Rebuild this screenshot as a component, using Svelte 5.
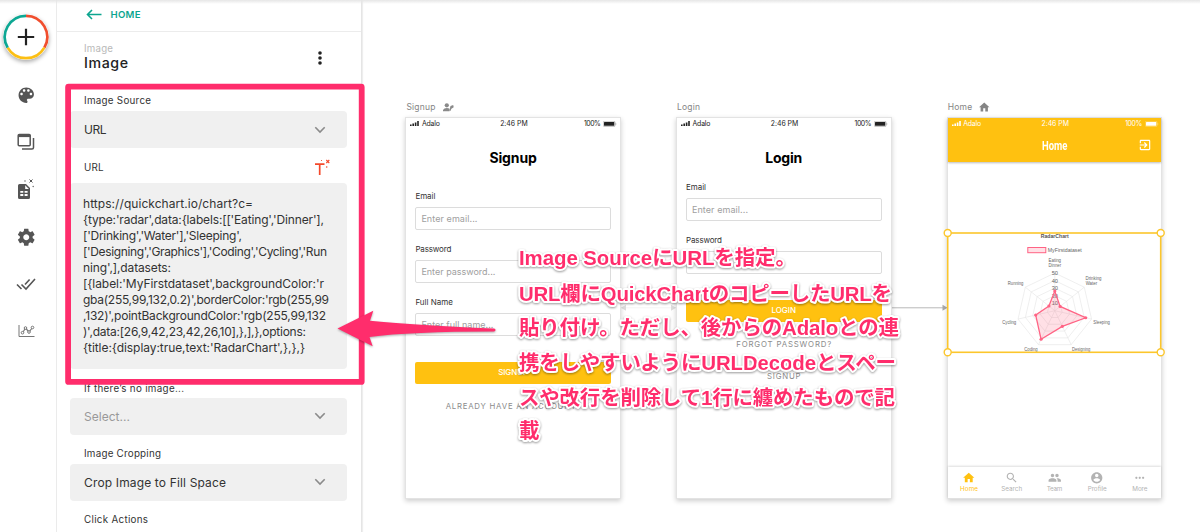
<script>
  function fit(node, width) {
    const n = [...node.textContent].length;
    const natural = node.getBoundingClientRect().width;
    const gap = (width - natural) / (n - 1);
    node.style.letterSpacing = gap + 'px';
    node.style.marginRight = -gap + 'px';
  }

  const urlLines = [
    ['https://quickchart.io/chart?c=', 170],
    ["{type:'radar',data:{labels:[['Eating','Dinner'],", 241],
    ["['Drinking','Water'],'Sleeping',", 159],
    ["['Designing','Graphics'],'Coding','Cycling','Run", 244],
    ["ning',],datasets:", 88],
    ["[{label:'MyFirstdataset',backgroundColor:'r", 241],
    ["gba(255,99,132,0.2)',borderColor:'rgb(255,99", 246],
    [",132)',pointBackgroundColor:'rgb(255,99,132", 243],
    [")',data:[26,9,42,23,42,26,10],},],},options:", 223],
    ["{title:{display:true,text:'RadarChart',},},}", 222]
  ];

  const notes = [
    ['Image SourceにURLを指定。', 265.3, 277],
    ['URL欄にQuickChartのコピーしたURLを', 300.5, 373],
    ['貼り付け。ただし、後からのAdaloとの連', 335.2, 380],
    ['携をしやすいようにURLDecodeとスペー', 370.2, 377],
    ['スや改行を削除して1行に纏めたもので記', 405.2, 376],
    ['載', 438, 20.5]
  ];

  const icons = {
    palette: 'M12 3c-4.97 0-9 4.03-9 9s4.03 9 9 9c.83 0 1.5-.67 1.5-1.5 0-.39-.15-.74-.39-1.01-.23-.26-.38-.61-.38-.99 0-.83.67-1.5 1.5-1.5H16c2.76 0 5-2.24 5-5 0-4.42-4.03-8-9-8zm-5.5 9c-.83 0-1.5-.67-1.5-1.5S5.67 9 6.5 9 8 9.67 8 10.5 7.33 12 6.5 12zm3-4C8.67 8 8 7.33 8 6.5S8.67 5 9.5 5s1.5.67 1.5 1.5S10.33 8 9.5 8zm5 0c-.83 0-1.5-.67-1.5-1.5S13.67 5 14.5 5s1.5.67 1.5 1.5S15.33 8 14.5 8zm3 4c-.83 0-1.5-.67-1.5-1.5S16.67 9 17.5 9s1.5.67 1.5 1.5-.67 1.5-1.5 1.5z',
    gear: 'M19.43 12.98c.04-.32.07-.64.07-.98s-.03-.66-.07-.98l2.11-1.65c.19-.15.24-.42.12-.64l-2-3.46c-.12-.22-.39-.3-.61-.22l-2.49 1c-.52-.4-1.08-.73-1.69-.98l-.38-2.65C14.46 2.18 14.25 2 14 2h-4c-.25 0-.46.18-.49.42l-.38 2.65c-.61.25-1.17.59-1.69.98l-2.49-1c-.23-.09-.49 0-.61.22l-2 3.46c-.13.22-.07.49.12.64l2.11 1.65c-.04.32-.07.65-.07.98s.03.66.07.98l-2.11 1.65c-.19.15-.24.42-.12.64l2 3.46c.12.22.39.3.61.22l2.49-1c.52.4 1.08.73 1.69.98l.38 2.65c.03.24.24.42.49.42h4c.25 0 .46-.18.49-.42l.38-2.65c.61-.25 1.17-.59 1.69-.98l2.49 1c.23.09.49 0 .61-.22l2-3.46c.12-.22.07-.49-.12-.64l-2.11-1.65zM12 15.5c-1.93 0-3.5-1.57-3.5-3.5s1.57-3.5 3.5-3.5 3.5 1.57 3.5 3.5-1.57 3.5-3.5 3.5z',
    home: 'M10 20v-6h4v6h5v-8h3L12 3 2 12h3v8z',
    search: 'M15.5 14h-.79l-.28-.27C15.41 12.59 16 11.11 16 9.5 16 5.91 13.09 3 9.5 3S3 5.91 3 9.5 5.91 16 9.5 16c1.61 0 3.09-.59 4.23-1.57l.27.28v.79l5 4.99L20.49 19l-4.99-5zm-6 0C7.01 14 5 11.99 5 9.5S7.01 5 9.5 5 14 7.01 14 9.5 11.99 14 9.5 14z',
    team: 'M16 11c1.66 0 2.99-1.34 2.99-3S17.66 5 16 5c-1.66 0-3 1.34-3 3s1.34 3 3 3zm-8 0c1.66 0 2.99-1.34 2.99-3S9.66 5 8 5C6.34 5 5 6.34 5 8s1.34 3 3 3zm0 2c-2.33 0-7 1.17-7 3.5V19h14v-2.5c0-2.33-4.67-3.5-7-3.5zm8 0c-.29 0-.62.02-.97.05 1.16.84 1.97 1.97 1.97 3.45V19h6v-2.5c0-2.33-4.67-3.5-7-3.5z',
    profile: 'M12 2C6.48 2 2 6.48 2 12s4.48 10 10 10 10-4.48 10-10S17.52 2 12 2zm0 3c1.66 0 3 1.34 3 3s-1.34 3-3 3-3-1.34-3-3 1.34-3 3-3zm0 14.2c-2.5 0-4.71-1.28-6-3.22.03-1.99 4-3.08 6-3.08 1.99 0 5.97 1.09 6 3.08-1.29 1.94-3.5 3.22-6 3.22z',
    more: 'M6 10c-1.1 0-2 .9-2 2s.9 2 2 2 2-.9 2-2-.9-2-2-2zm12 0c-1.1 0-2 .9-2 2s.9 2 2 2 2-.9 2-2-.9-2-2-2zm-6 0c-1.1 0-2 .9-2 2s.9 2 2 2 2-.9 2-2-.9-2-2-2z',
    exit: 'M10.09 15.59L11.5 17l5-5-5-5-1.41 1.41L12.67 11H3v2h9.67l-2.58 2.59zM19 3H5c-1.11 0-2 .9-2 2v4h2V5h14v14H5v-4H3v4c0 1.1.89 2 2 2h14c1.1 0 2-.9 2-2V5c0-1.1-.9-2-2-2z'
  };

  const tabs = [
    ['home', 'Home', 18],
    ['search', 'Search', 21],
    ['team', 'Team', 15.5],
    ['profile', 'Profile', 19],
    ['more', 'More', 15]
  ];

  const values = [26, 9, 42, 23, 42, 26, 10];
  const R = 37.7;
  const spoke = (v, i) => {
    const a = (i * 2 * Math.PI) / 7 - Math.PI / 2;
    return [(v / 50) * R * Math.cos(a), (v / 50) * R * Math.sin(a)];
  };
  const ring = (v) => values.map((_, i) => spoke(v, i).join(',')).join(' ');
  const dataPts = values.map(spoke);
  const labels = [
    ['Eating', 0, -49.2, 12.5], ['Dinner', 0, -44, 12.5],
    ['Drinking', 38.7, -31, 16], ['Water', 36.6, -25.8, 11.5],
    ['Sleeping', 46.8, 13.3, 16.5], ['Designing', 26.4, 40.2, 18.5],
    ['Coding', -23.8, 40.2, 13.5], ['Cycling', -45.6, 13.3, 14], ['Running', -39.2, -25.7, 15.7]
  ];
</script>

{#snippet icon(name, size)}
  <svg width={size} height={size} viewBox="0 0 24 24" fill="currentColor"><path d={icons[name]} /></svg>
{/snippet}

{#snippet chevron()}
  <svg width="12" height="8" viewBox="0 0 12 8" fill="none" stroke="#8b8b8b" stroke-width="1.6"><path d="M1.3 1.2 6 6l4.7-4.8" /></svg>
{/snippet}

{#snippet status()}
  <div class="status">
    <div class="carrier">
      <svg width="9" height="5" viewBox="0 0 9 5" fill="currentColor"><path d="M0 3.4h1.6V5H0zM2.4 2.6H4V5H2.4zM4.8 1.4h1.6V5H4.8zM7.2 0h1.6v5H7.2z" /></svg>
      <span use:fit={18}>Adalo</span>
    </div>
    <span use:fit={27.5}>2:46 PM</span>
    <div class="charge">
      <span use:fit={17}>100%</span>
      <svg width="14" height="6" viewBox="0 0 14 6"><rect x=".3" y=".3" width="11.8" height="5.2" rx="1" fill="none" stroke="currentColor" stroke-opacity=".5" stroke-width=".5" /><rect x="1" y="1" width="10.3" height="3.8" rx=".5" fill="currentColor" /><path d="M12.7 2v2c.8-.3.8-1.7 0-2" fill="currentColor" opacity=".6" /></svg>
    </div>
  </div>
{/snippet}

{#snippet field(label, lw, hint, hw)}
  <div class="field">
    <div class="name"><span use:fit={lw}>{label}</span></div>
    <div class="input">{#if hint}<span use:fit={hw}>{hint}</span>{/if}</div>
  </div>
{/snippet}

<div class="app">
  <nav class="rail">
    <div class="add">
      <svg width="46" height="46" viewBox="-23 -23 46 46" fill="none" stroke-width="2.7">
        <circle r="22" fill="#fff" />
        <path d="M0-21.2A21.2 21.2 0 0 1 18.36 10.6" stroke="#f04e2e" />
        <path d="M18.36 10.6A21.2 21.2 0 0 1-18.36 10.6" stroke="#fcbf14" />
        <path d="M-18.36 10.6A21.2 21.2 0 0 1 0-21.2" stroke="#0da793" />
        <path d="M-8.2 0H8.2M0-8.2V8.2" stroke="#222" stroke-width="2.2" />
      </svg>
    </div>
    <div class="slot">{@render icon('palette', 20.5)}</div>
    <div class="slot">
      <svg width="18" height="18" viewBox="0 0 18 18" fill="none" stroke="currentColor" stroke-width="1.5"><rect x="1.2" y="1.5" width="12" height="11.3" rx="1" /><path d="M1 3h12.5" stroke-width="2.2" /><path d="M16.5 5v9.5q0 1.5-1.5 1.5H5" /></svg>
    </div>
    <div class="slot">
      <svg width="18" height="22" viewBox="0 0 18 22"><path fill="currentColor" fill-rule="evenodd" d="M2.5 5H9l4 4v9.500q0 1.500-1.500 1.500h-9Q1 20 1 18.500v-12Q1 5 2.500 5zM8.200 6.300V10h3.700zM3.300 12v1.700h3V12zm4.300 0v1.700h3V12zm-4.300 3v2h3v-2zm4.300 0v2h3v-2z" /><path d="m12.500 0.500 3 3m0-3-3 3" stroke="#555" /><circle cx="8" cy="2" r=".8" fill="#777" /><circle cx="16.200" cy="7.500" r=".8" fill="#777" /></svg>
    </div>
    <div class="slot">{@render icon('gear', 20.5)}</div>
    <div class="slot">
      <svg width="20" height="14" viewBox="0 0 20 14" fill="none" stroke="currentColor" stroke-width="1.6"><path d="m1 7.500 4.500 4.500M5.500 7.500l4.500 4.500 9-10M9 7.500l4.600-5" /></svg>
    </div>
    <div class="slot">
      <svg width="17" height="14" viewBox="0 0 17 14" fill="none" stroke="#777" stroke-width="1"><path d="M1 1v11.5h15.5" /><path d="m4.5 9 3-5 3.5 4 3.5-4.5" stroke-width="1.2" /><g fill="#fff"><circle cx="4.5" cy="8.7" r="1.3" /><circle cx="7.5" cy="4" r="1.3" /><circle cx="11" cy="8" r="1.3" /><circle cx="14.5" cy="3.5" r="1.3" /></g></svg>
    </div>
  </nav>

  <aside class="panel">
    <div class="back">
      <svg width="16" height="11" viewBox="0 0 16 11" fill="none" stroke="currentColor" stroke-width="1.6"><path d="M15.500 5.500H1.500M6 1 1.500 5.500 6 10" /></svg>
      <span use:fit={30}>HOME</span>
    </div>
    <header>
      <div>
        <div class="kind"><span use:fit={29}>Image</span></div>
        <div class="title"><span use:fit={44}>Image</span></div>
      </div>
      <svg width="4" height="14" viewBox="0 0 4 14" fill="#222"><circle cx="2" cy="2" r="1.8" /><circle cx="2" cy="7" r="1.8" /><circle cx="2" cy="12" r="1.8" /></svg>
    </header>
    <div class="label first"><span use:fit={67}>Image Source</span></div>
    <div class="select"><span use:fit={22.5}>URL</span>{@render chevron()}</div>
    <div class="label url">
      <span use:fit={19.5}>URL</span>
      <svg width="16" height="17" viewBox="0 0 16 17" fill="none" stroke="#f4492b"><path d="M0 5.2h9.5M4.7 5.2V16" stroke-width="1.7" /><path d="m11.3 1 3 3m0-3-3 3" stroke-width="1.1" /><circle cx="6.5" cy="1.5" r=".6" fill="#f4492b" stroke="none" /><circle cx="11.7" cy="8" r=".8" fill="#f4492b" stroke="none" /></svg>
    </div>
    <div class="code">
      {#each urlLines as [line, w]}<div><span use:fit={w}>{line}</span></div>{/each}
    </div>
    <div class="label none"><span use:fit={100}>If there’s no image...</span></div>
    <div class="select muted"><span use:fit={46}>Select...</span>{@render chevron()}</div>
    <div class="label mid"><span use:fit={77}>Image Cropping</span></div>
    <div class="select"><span use:fit={142}>Crop Image to Fill Space</span>{@render chevron()}</div>
    <div class="label mid"><span use:fit={64}>Click Actions</span></div>
  </aside>

  <main>
    <svg class="links" width="1200" height="532" fill="none" stroke="#b8b8b8">
      <path d="M890 307.800h54" /><path d="m942.500 304.800 5 3-5 3z" fill="#aaa" stroke="none" />
      <path d="M621 307.800h56" stroke="#f4f4f4" /><path d="m621 307.800 5-3v6zM676 307.800l-5-3v6z" fill="#ddd" stroke="none" />
    </svg>

    <section class="screen signup">
      <div class="tag"><span use:fit={29}>Signup</span>
        <svg width="11" height="9" viewBox="0 0 11 9" fill="#8a8a8a"><circle cx="3.800" cy="2.300" r="2.100" /><path d="M0 8.300V7q1-2 3.800-2Q6 5 6.500 6v2.300z" /><path d="m6.300 7.500 1.200-4.400L10.200 2l.5 2.200-2.300 1.500-1 2.300z" /></svg>
      </div>
      {@render status()}
      <h2><span use:fit={47.5}>Signup</span></h2>
      {@render field('Email', 20, 'Enter email...', 56)}
      {@render field('Password', 36, 'Enter password...', 74)}
      {@render field('Full Name', 37.5, 'Enter full name...', 72)}
      <div class="button"><span use:fit={30}>SIGNUP</span></div>
      <div class="link"><span use:fit={135}>ALREADY HAVE AN ACCOUNT?</span></div>
    </section>

    <section class="screen login">
      <div class="tag"><span use:fit={23}>Login</span></div>
      {@render status()}
      <h2><span use:fit={37}>Login</span></h2>
      {@render field('Email', 20, 'Enter email...', 56)}
      {@render field('Password', 36, '', 0)}
      <div class="button"><span use:fit={24.5}>LOGIN</span></div>
      <div class="link"><span use:fit={95}>FORGOT PASSWORD?</span></div>
      <div class="link second"><span use:fit={33.5}>SIGNUP</span></div>
    </section>

    <section class="screen home">
      <div class="tag"><span use:fit={24.5}>Home</span>{@render icon('home', 12.5)}</div>
      <div class="top">
        {@render status()}
        <div class="bar"><span class="bartitle">Home</span><span class="exit">{@render icon('exit', 14)}</span></div>
      </div>
      <svg class="chart" width="213.5" height="119" viewBox="947.5 233 213.5 119">
        <g transform="translate(1054.3 310.7)">
          <g fill="none" stroke="#e4e4e4" stroke-width=".6">
            {#each [10, 20, 30, 40, 50] as v}<polygon points={ring(v)} />{/each}
            {#each values as _, i}<path d={`M0 0L${spoke(50, i)}`} />{/each}
          </g>
          <g font-size="5.7" fill="#666" text-anchor="middle">
            {#each [10, 20, 30, 40, 50] as v}<text y={2 - (v / 50) * R}>{v}</text>{/each}
          </g>
          <polygon points={dataPts.join(' ')} fill="#ff6384" fill-opacity=".2" stroke="#ff6384" stroke-width="1.3" />
          {#each dataPts as [x, y]}<circle cx={x} cy={y} r="1.600" fill="#ff6384" />{/each}
          <g font-size="5" fill="#666" text-anchor="middle">
            {#each labels as [t, x, y, w]}<text {x} {y} textLength={w} lengthAdjust="spacingAndGlyphs">{t}</text>{/each}
          </g>
          <text y="-72.800" font-size="5.400" font-weight="700" fill="#555" text-anchor="middle" textLength="28" lengthAdjust="spacingAndGlyphs">RadarChart</text>
          <rect x="-27" y="-63.200" width="18" height="5.200" fill="#ffe0e6" stroke="#ff6384" />
          <text x="-7" y="-58.800" font-size="5.400" fill="#666" textLength="34" lengthAdjust="spacingAndGlyphs">MyFirstdataset</text>
        </g>
      </svg>
      <div class="tabs">
        {#each tabs as [name, text, w], i}
          <div class="tab" class:active={i === 0}>{@render icon(name, 13.5)}<span use:fit={w}>{text}</span></div>
        {/each}
      </div>
    </section>

    <svg class="over" width="1200" height="532">
      <g fill="#fff" stroke="#fcc62c" stroke-width="1.6">
        <rect x="947.7" y="233" width="213" height="119.3" fill="none" />
        {#each [[947.7, 233], [1160.7, 233], [947.7, 352.3], [1160.7, 352.3]] as [x, y]}<circle cx={x} cy={y} r="3.5" stroke-width="1.4" />{/each}
      </g>
      <rect x="68.100" y="86.700" width="293.600" height="295.200" rx=".5" fill="none" stroke="#ff2d6c" stroke-width="5.800" stroke-linejoin="round" />
      <path class="arrow" d="M337.500 328.500 373.300 310.700 370 320.700Q410 325 494 328.500q1.500.3 1.500 1.500t-1.500 1.500Q410 331.500 369.500 337l3.200 9.200z" fill="#ff2d6c" />
      <g class="note">
        {#each notes as [t, y, w]}<text x="519" {y} textLength={w}>{t}</text>{/each}
      </g>
    </svg>
  </main>
</div>

<style>
  :global(body) { margin: 0; overflow: hidden; }
  .app { position: relative; display: flex; width: 1200px; height: 532px; overflow: hidden; background: #fff; font-family: Inter, "Noto Sans CJK JP", sans-serif; color: #333; }
  .app::before { content: ""; position: absolute; z-index: 5; inset: 0 0 auto; height: 4px; background: linear-gradient(#e6e6e6, #ffffff00); }
  svg { display: block; flex: none; }
  span { display: inline-block; white-space: nowrap; }
  .rail { width: 56px; border-right: 1px solid #ebebeb; color: #555; }
  .add { width: 46px; margin: 14px 0 11.4px 3.3px; border-radius: 50%; box-shadow: 0 2px 4px #0005; }
  .slot { height: 47.25px; width: 52px; display: flex; align-items: center; justify-content: center; }
  .panel { box-sizing: border-box; width: 305px; height: 532px; border-right: 1px solid #e5e5e5; box-shadow: 1px 0 1px #0001; }
  .back { box-sizing: border-box; display: flex; align-items: center; gap: 8.5px; height: 32px; padding: 0 0 2px 29px; border-bottom: 1px solid #ececec; color: #0ca58f; font-size: 9.6px; font-weight: 600; }
  header { display: flex; justify-content: space-between; align-items: center; height: 52px; padding: 0 39.5px 0 27px; }
  .kind { height: 13px; line-height: 13px; font-size: 9.7px; color: #b9b9b9; }
  .title { height: 19px; line-height: 15px; font-size: 14.2px; font-weight: 500; color: #222; }
  .label { display: flex; align-items: center; justify-content: space-between; padding: 0 18px 0 27px; font-size: 9.8px; color: #333; }
  .first { height: 14px; margin-top: 9.5px; padding-bottom: 3.5px; }
  .url { box-sizing: border-box; height: 35px; padding-top: 4px; padding-right: 30.5px; }
  .none { height: 28.5px; }
  .none span { padding-top: 9.5px; }
  .mid { height: 20px; padding-top: 9px; }
  .select { box-sizing: border-box; display: flex; align-items: center; justify-content: space-between; width: 277px; height: 37px; margin-left: 13px; padding: 0 21px 0 14px; border-radius: 4px; background: #f0f0f0; font-size: 12px; }
  .muted { color: #999; }
  .code { box-sizing: border-box; width: 277px; height: 186px; margin-left: 13px; padding: 12.5px 0 0 13px; border-radius: 4px; background: #f0f0f0; font-size: 12px; line-height: 16.08px; }
  .code div { height: 16.08px; }
  .links, .over { position: absolute; inset: 0; }
  .over { z-index: 4; pointer-events: none; }
  .arrow { filter: drop-shadow(0 1px 1px #0005); }
  .note { font: 700 20.5px "Liberation Sans", "Noto Sans CJK JP", sans-serif; fill: #ff2d6c; stroke: #fff; stroke-width: 4px; stroke-linejoin: round; paint-order: stroke; filter: drop-shadow(0 1px 1px #0006); }
  .screen { position: absolute; top: 118px; width: 213.5px; height: 380px; background: #fff; box-shadow: 0 0 0 1px #e3e3e3, 0 2px 5px 1px #0003; }
  .signup { left: 406.4px; }
  .login { left: 677px; }
  .home { left: 947.7px; }
  .tag { position: absolute; top: -17px; left: 0; display: flex; gap: 7.5px; align-items: center; height: 12px; font-size: 8.5px; color: #858585; }
  .home .tag { gap: 6px; }
  .status { display: grid; grid-template-columns: 1fr auto 1fr; align-items: center; height: 11px; padding: 0 2.5px 1px 4px; font-size: 6.9px; color: #222; }
  .carrier, .charge { display: flex; gap: 2.5px; align-items: center; }
  .charge { justify-content: end; }
  h2 { margin: 16px 0 20px; height: 24px; line-height: 23px; text-align: center; font-size: 14px; font-weight: 700; color: #000; }
  .login h2 { margin-bottom: 11px; }
  .field { height: 40px; margin: 0 9px 13px; font-size: 8px; }
  .name { height: 16.5px; line-height: 12px; }
  .input { box-sizing: border-box; display: flex; align-items: center; height: 23.5px; padding-left: 5px; border: 1px solid #dcdcdc; border-radius: 2px; background: #fff; font-size: 9px; color: #a0a0a0; }
  .button { height: 22.5px; line-height: 21px; margin: 25.5px 9px 0; border-radius: 2px; background: #ffc110; color: #fff; text-align: center; font-size: 8px; font-weight: 500; }
  .link { margin-top: 15.5px; height: 12px; line-height: 12px; text-align: center; font-size: 7.8px; color: #8c8c8c; }
  .second { margin-top: 20px; }
  .top { height: 43.5px; background: #ffc110; box-shadow: 0 1px 2px #0004; }
  .top .status { color: #fff; }
  .bar { display: grid; grid-template-columns: 1fr auto 1fr; align-items: center; height: 30.5px; color: #fff; }
  .bartitle { grid-column: 2; font: 700 12.5px Roboto, sans-serif; transform: scaleX(.76); }
  .exit { justify-self: end; margin-right: 9px; }
  .chart { margin-top: 71.5px; font-family: "Liberation Sans", Arial, sans-serif; }
  .tabs { display: grid; grid-template-columns: repeat(5, 1fr); margin-top: 114.5px; height: 31.5px; box-shadow: 0 -1px 2px #0002; }
  .tab { display: flex; flex-direction: column; align-items: center; padding-top: 4.5px; font-size: 6.3px; line-height: 8px; color: #b3b3b3; }
  .active { color: #ffc110; }
</style>
